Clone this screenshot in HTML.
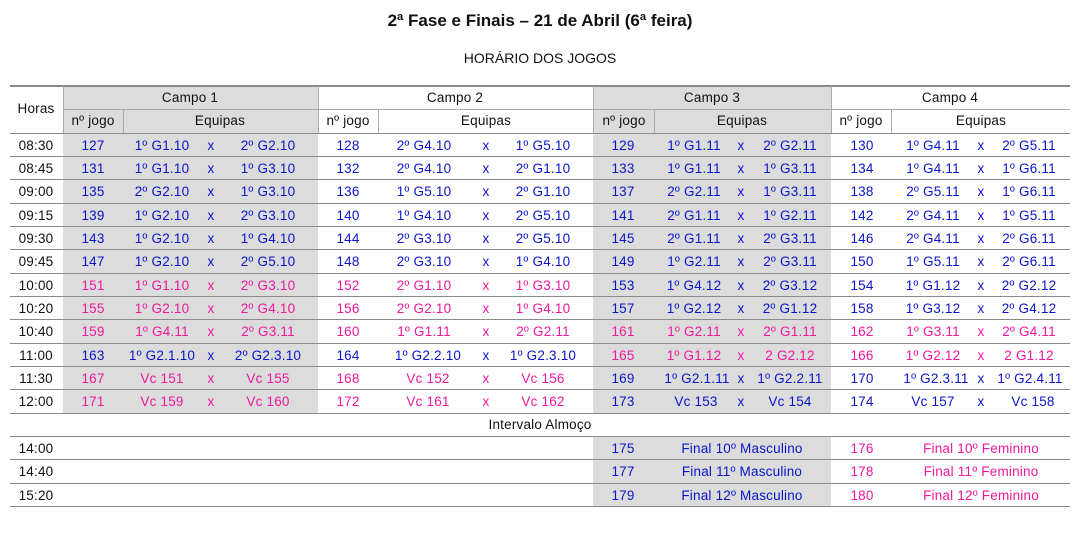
<!DOCTYPE html>
<html><head><meta charset="utf-8"><style>
body{margin:0;width:1086px;height:533px;background:#fff;position:relative;font-family:"Liberation Sans",Arial,sans-serif;overflow:hidden}
.a{position:absolute}
.t{position:absolute;white-space:nowrap;transform:translateX(-50%);font-size:13.5px;line-height:23px;letter-spacing:0.2px}
.g{background:#dcdcdc;position:absolute}
.h{position:absolute;left:10px;width:1060px;height:1px;background:#8a8a8a}
.v{position:absolute;width:1px;background:#aaa}
.r{position:absolute;left:0;width:1086px;height:23px}
.b{color:#0a14c8}.p{color:#f0189e}.k{color:#111}
</style></head><body>
<div class="t k" style="left:540px;top:9px;font-size:17px;font-weight:bold;letter-spacing:0">2ª Fase e Finais – 21 de Abril (6ª feira)</div>
<div class="t k" style="left:540px;top:47px;font-size:14px;letter-spacing:0">HORÁRIO DOS JOGOS</div>

<div class="g" style="left:63px;top:86px;width:255px;height:327px"></div>
<div class="g" style="left:593px;top:86px;width:238px;height:327px"></div>
<div class="g" style="left:593px;top:436px;width:238px;height:70px"></div>

<div class="h" style="top:85px;height:2px"></div>
<div class="h" style="left:63px;width:1007px;top:109px;background:#aaa"></div>
<div class="v" style="left:63px;top:86px;height:47px"></div>
<div class="v" style="left:318px;top:86px;height:47px"></div>
<div class="v" style="left:593px;top:86px;height:47px"></div>
<div class="v" style="left:831px;top:86px;height:47px"></div>
<div class="v" style="left:123px;top:109px;height:24px"></div>
<div class="v" style="left:378px;top:109px;height:24px"></div>
<div class="v" style="left:654px;top:109px;height:24px"></div>
<div class="v" style="left:891px;top:109px;height:24px"></div>

<div class="t k" style="left:36px;top:97px">Horas</div>
<div class="t k" style="left:190px;top:86px">Campo 1</div>
<div class="t k" style="left:455px;top:86px">Campo 2</div>
<div class="t k" style="left:712px;top:86px">Campo 3</div>
<div class="t k" style="left:950px;top:86px">Campo 4</div>
<div class="t k" style="left:93px;top:109px">nº jogo</div>
<div class="t k" style="left:220px;top:109px">Equipas</div>
<div class="t k" style="left:348px;top:109px">nº jogo</div>
<div class="t k" style="left:486px;top:109px">Equipas</div>
<div class="t k" style="left:624px;top:109px">nº jogo</div>
<div class="t k" style="left:742px;top:109px">Equipas</div>
<div class="t k" style="left:861px;top:109px">nº jogo</div>
<div class="t k" style="left:981px;top:109px">Equipas</div>

<div class="h" style="top:133px"></div>
<div class="h" style="top:156px"></div>
<div class="h" style="top:179px"></div>
<div class="h" style="top:203px"></div>
<div class="h" style="top:226px"></div>
<div class="h" style="top:249px"></div>
<div class="h" style="top:273px"></div>
<div class="h" style="top:296px"></div>
<div class="h" style="top:319px"></div>
<div class="h" style="top:343px"></div>
<div class="h" style="top:366px"></div>
<div class="h" style="top:389px"></div>
<div class="h" style="top:413px"></div>
<div class="h" style="top:436px"></div>
<div class="h" style="top:459px"></div>
<div class="h" style="top:483px"></div>
<div class="h" style="top:506px"></div>

<div class="r" style="top:134px">
<span class="t k" style="left:36px">08:30</span>
<span class="t b" style="left:93px">127</span><span class="t b" style="left:162px">1º G1.10</span><span class="t b" style="left:211px">x</span><span class="t b" style="left:268px">2º G2.10</span>
<span class="t b" style="left:348px">128</span><span class="t b" style="left:424px">2º G4.10</span><span class="t b" style="left:486px">x</span><span class="t b" style="left:543px">1º G5.10</span>
<span class="t b" style="left:623px">129</span><span class="t b" style="left:694px">1º G1.11</span><span class="t b" style="left:741px">x</span><span class="t b" style="left:790px">2º G2.11</span>
<span class="t b" style="left:862px">130</span><span class="t b" style="left:933px">1º G4.11</span><span class="t b" style="left:981px">x</span><span class="t b" style="left:1029px">2º G5.11</span>
</div>
<div class="r" style="top:157px">
<span class="t k" style="left:36px">08:45</span>
<span class="t b" style="left:93px">131</span><span class="t b" style="left:162px">1º G1.10</span><span class="t b" style="left:211px">x</span><span class="t b" style="left:268px">1º G3.10</span>
<span class="t b" style="left:348px">132</span><span class="t b" style="left:424px">2º G4.10</span><span class="t b" style="left:486px">x</span><span class="t b" style="left:543px">2º G1.10</span>
<span class="t b" style="left:623px">133</span><span class="t b" style="left:694px">1º G1.11</span><span class="t b" style="left:741px">x</span><span class="t b" style="left:790px">1º G3.11</span>
<span class="t b" style="left:862px">134</span><span class="t b" style="left:933px">1º G4.11</span><span class="t b" style="left:981px">x</span><span class="t b" style="left:1029px">1º G6.11</span>
</div>
<div class="r" style="top:180px">
<span class="t k" style="left:36px">09:00</span>
<span class="t b" style="left:93px">135</span><span class="t b" style="left:162px">2º G2.10</span><span class="t b" style="left:211px">x</span><span class="t b" style="left:268px">1º G3.10</span>
<span class="t b" style="left:348px">136</span><span class="t b" style="left:424px">1º G5.10</span><span class="t b" style="left:486px">x</span><span class="t b" style="left:543px">2º G1.10</span>
<span class="t b" style="left:623px">137</span><span class="t b" style="left:694px">2º G2.11</span><span class="t b" style="left:741px">x</span><span class="t b" style="left:790px">1º G3.11</span>
<span class="t b" style="left:862px">138</span><span class="t b" style="left:933px">2º G5.11</span><span class="t b" style="left:981px">x</span><span class="t b" style="left:1029px">1º G6.11</span>
</div>
<div class="r" style="top:204px">
<span class="t k" style="left:36px">09:15</span>
<span class="t b" style="left:93px">139</span><span class="t b" style="left:162px">1º G2.10</span><span class="t b" style="left:211px">x</span><span class="t b" style="left:268px">2º G3.10</span>
<span class="t b" style="left:348px">140</span><span class="t b" style="left:424px">1º G4.10</span><span class="t b" style="left:486px">x</span><span class="t b" style="left:543px">2º G5.10</span>
<span class="t b" style="left:623px">141</span><span class="t b" style="left:694px">2º G1.11</span><span class="t b" style="left:741px">x</span><span class="t b" style="left:790px">1º G2.11</span>
<span class="t b" style="left:862px">142</span><span class="t b" style="left:933px">2º G4.11</span><span class="t b" style="left:981px">x</span><span class="t b" style="left:1029px">1º G5.11</span>
</div>
<div class="r" style="top:227px">
<span class="t k" style="left:36px">09:30</span>
<span class="t b" style="left:93px">143</span><span class="t b" style="left:162px">1º G2.10</span><span class="t b" style="left:211px">x</span><span class="t b" style="left:268px">1º G4.10</span>
<span class="t b" style="left:348px">144</span><span class="t b" style="left:424px">2º G3.10</span><span class="t b" style="left:486px">x</span><span class="t b" style="left:543px">2º G5.10</span>
<span class="t b" style="left:623px">145</span><span class="t b" style="left:694px">2º G1.11</span><span class="t b" style="left:741px">x</span><span class="t b" style="left:790px">2º G3.11</span>
<span class="t b" style="left:862px">146</span><span class="t b" style="left:933px">2º G4.11</span><span class="t b" style="left:981px">x</span><span class="t b" style="left:1029px">2º G6.11</span>
</div>
<div class="r" style="top:250px">
<span class="t k" style="left:36px">09:45</span>
<span class="t b" style="left:93px">147</span><span class="t b" style="left:162px">1º G2.10</span><span class="t b" style="left:211px">x</span><span class="t b" style="left:268px">2º G5.10</span>
<span class="t b" style="left:348px">148</span><span class="t b" style="left:424px">2º G3.10</span><span class="t b" style="left:486px">x</span><span class="t b" style="left:543px">1º G4.10</span>
<span class="t b" style="left:623px">149</span><span class="t b" style="left:694px">1º G2.11</span><span class="t b" style="left:741px">x</span><span class="t b" style="left:790px">2º G3.11</span>
<span class="t b" style="left:862px">150</span><span class="t b" style="left:933px">1º G5.11</span><span class="t b" style="left:981px">x</span><span class="t b" style="left:1029px">2º G6.11</span>
</div>
<div class="r" style="top:274px">
<span class="t k" style="left:36px">10:00</span>
<span class="t p" style="left:93px">151</span><span class="t p" style="left:162px">1º G1.10</span><span class="t p" style="left:211px">x</span><span class="t p" style="left:268px">2º G3.10</span>
<span class="t p" style="left:348px">152</span><span class="t p" style="left:424px">2º G1.10</span><span class="t p" style="left:486px">x</span><span class="t p" style="left:543px">1º G3.10</span>
<span class="t b" style="left:623px">153</span><span class="t b" style="left:694px">1º G4.12</span><span class="t b" style="left:741px">x</span><span class="t b" style="left:790px">2º G3.12</span>
<span class="t b" style="left:862px">154</span><span class="t b" style="left:933px">1º G1.12</span><span class="t b" style="left:981px">x</span><span class="t b" style="left:1029px">2º G2.12</span>
</div>
<div class="r" style="top:297px">
<span class="t k" style="left:36px">10:20</span>
<span class="t p" style="left:93px">155</span><span class="t p" style="left:162px">1º G2.10</span><span class="t p" style="left:211px">x</span><span class="t p" style="left:268px">2º G4.10</span>
<span class="t p" style="left:348px">156</span><span class="t p" style="left:424px">2º G2.10</span><span class="t p" style="left:486px">x</span><span class="t p" style="left:543px">1º G4.10</span>
<span class="t b" style="left:623px">157</span><span class="t b" style="left:694px">1º G2.12</span><span class="t b" style="left:741px">x</span><span class="t b" style="left:790px">2º G1.12</span>
<span class="t b" style="left:862px">158</span><span class="t b" style="left:933px">1º G3.12</span><span class="t b" style="left:981px">x</span><span class="t b" style="left:1029px">2º G4.12</span>
</div>
<div class="r" style="top:320px">
<span class="t k" style="left:36px">10:40</span>
<span class="t p" style="left:93px">159</span><span class="t p" style="left:162px">1º G4.11</span><span class="t p" style="left:211px">x</span><span class="t p" style="left:268px">2º G3.11</span>
<span class="t p" style="left:348px">160</span><span class="t p" style="left:424px">1º G1.11</span><span class="t p" style="left:486px">x</span><span class="t p" style="left:543px">2º G2.11</span>
<span class="t p" style="left:623px">161</span><span class="t p" style="left:694px">1º G2.11</span><span class="t p" style="left:741px">x</span><span class="t p" style="left:790px">2º G1.11</span>
<span class="t p" style="left:862px">162</span><span class="t p" style="left:933px">1º G3.11</span><span class="t p" style="left:981px">x</span><span class="t p" style="left:1029px">2º G4.11</span>
</div>
<div class="r" style="top:344px">
<span class="t k" style="left:36px">11:00</span>
<span class="t b" style="left:93px">163</span><span class="t b" style="left:162px">1º G2.1.10</span><span class="t b" style="left:211px">x</span><span class="t b" style="left:268px">2º G2.3.10</span>
<span class="t b" style="left:348px">164</span><span class="t b" style="left:428px">1º G2.2.10</span><span class="t b" style="left:486px">x</span><span class="t b" style="left:543px">1º G2.3.10</span>
<span class="t p" style="left:623px">165</span><span class="t p" style="left:694px">1º G1.12</span><span class="t p" style="left:741px">x</span><span class="t p" style="left:790px">2 G2.12</span>
<span class="t p" style="left:862px">166</span><span class="t p" style="left:933px">1º G2.12</span><span class="t p" style="left:981px">x</span><span class="t p" style="left:1029px">2 G1.12</span>
</div>
<div class="r" style="top:367px">
<span class="t k" style="left:36px">11:30</span>
<span class="t p" style="left:93px">167</span><span class="t p" style="left:162px">Vc 151</span><span class="t p" style="left:211px">x</span><span class="t p" style="left:268px">Vc 155</span>
<span class="t p" style="left:348px">168</span><span class="t p" style="left:428px">Vc 152</span><span class="t p" style="left:486px">x</span><span class="t p" style="left:543px">Vc 156</span>
<span class="t b" style="left:623px">169</span><span class="t b" style="left:697px">1º G2.1.11</span><span class="t b" style="left:741px">x</span><span class="t b" style="left:790px">1º G2.2.11</span>
<span class="t b" style="left:862px">170</span><span class="t b" style="left:936px">1º G2.3.11</span><span class="t b" style="left:981px">x</span><span class="t b" style="left:1030px">1º G2.4.11</span>
</div>
<div class="r" style="top:390px">
<span class="t k" style="left:36px">12:00</span>
<span class="t p" style="left:93px">171</span><span class="t p" style="left:162px">Vc 159</span><span class="t p" style="left:211px">x</span><span class="t p" style="left:268px">Vc 160</span>
<span class="t p" style="left:348px">172</span><span class="t p" style="left:428px">Vc 161</span><span class="t p" style="left:486px">x</span><span class="t p" style="left:543px">Vc 162</span>
<span class="t b" style="left:623px">173</span><span class="t b" style="left:696px">Vc 153</span><span class="t b" style="left:741px">x</span><span class="t b" style="left:790px">Vc 154</span>
<span class="t b" style="left:862px">174</span><span class="t b" style="left:933px">Vc 157</span><span class="t b" style="left:981px">x</span><span class="t b" style="left:1033px">Vc 158</span>
</div>
<div class="r" style="top:413px"><span class="t k" style="left:540px">Intervalo Almoço</span></div>
<div class="r" style="top:437px">
<span class="t k" style="left:36px">14:00</span>
<span class="t b" style="left:623px">175</span><span class="t b" style="left:742px">Final 10º Masculino</span>
<span class="t p" style="left:862px">176</span><span class="t p" style="left:981px">Final 10º Feminino</span>
</div>
<div class="r" style="top:460px">
<span class="t k" style="left:36px">14:40</span>
<span class="t b" style="left:623px">177</span><span class="t b" style="left:742px">Final 11º Masculino</span>
<span class="t p" style="left:862px">178</span><span class="t p" style="left:981px">Final 11º Feminino</span>
</div>
<div class="r" style="top:484px">
<span class="t k" style="left:36px">15:20</span>
<span class="t b" style="left:623px">179</span><span class="t b" style="left:742px">Final 12º Masculino</span>
<span class="t p" style="left:862px">180</span><span class="t p" style="left:981px">Final 12º Feminino</span>
</div>
</body></html>
